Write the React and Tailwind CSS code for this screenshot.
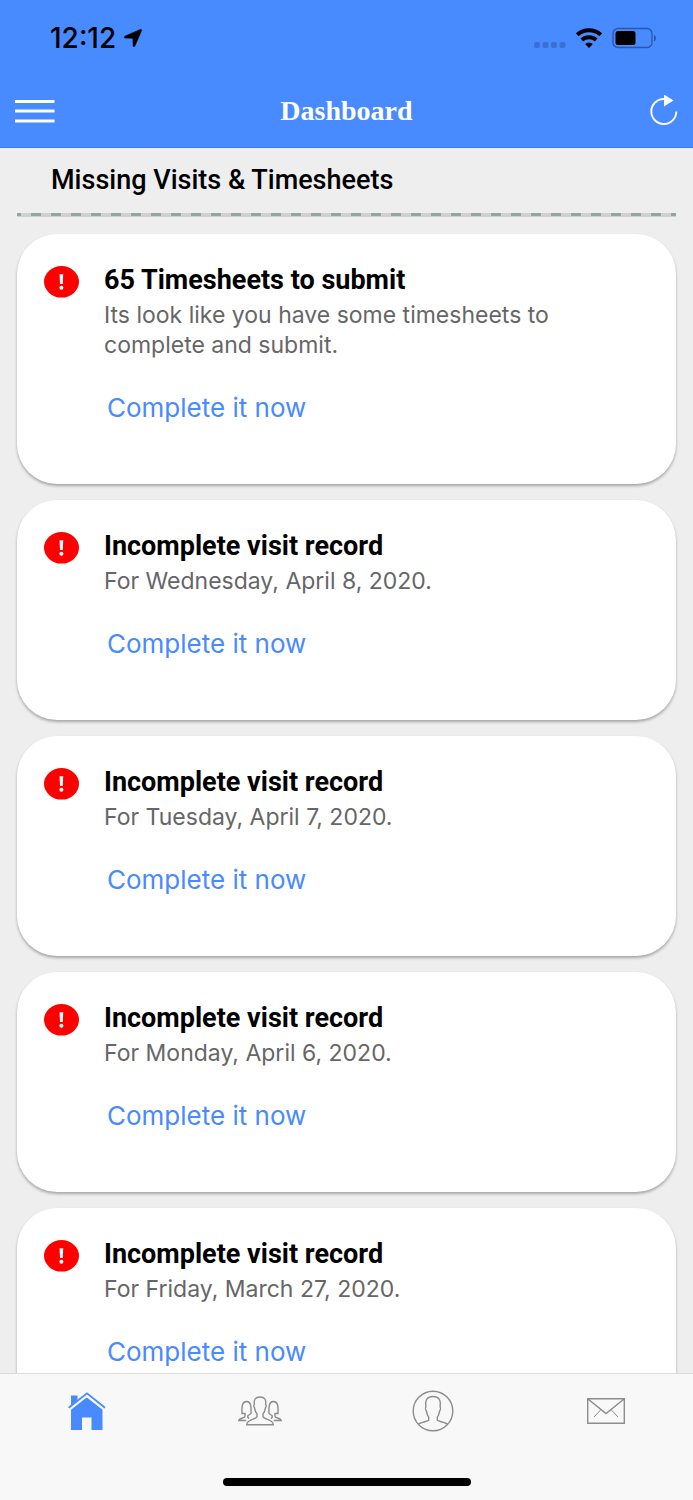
import React from 'react';

const tasks = [
    { title: '65 Timesheets to submit', text: 'Its look like you have some timesheets to complete and submit.' },
    { title: 'Incomplete visit record', text: 'For Wednesday, April 8, 2020.' },
    { title: 'Incomplete visit record', text: 'For Tuesday, April 7, 2020.' },
    { title: 'Incomplete visit record', text: 'For Monday, April 6, 2020.' },
    { title: 'Incomplete visit record', text: 'For Friday, March 27, 2020.' },
];

const StatusBar = () => (
    <div className="flex items-center justify-between h-[76px] pl-[50px] pr-9">
        <div className="flex items-center gap-2">
            <span className="text-[28px] leading-8 font-medium">12:12</span>
            <svg width="18" height="18" viewBox="0 0 18 18" stroke="#000" strokeWidth=".6" aria-hidden="true">
                <path d="M16.300.500.900 7.200C0 7.600.100 8.900 1 9l7.300.200c.4 0 .6.200.6.600l.2 7c.1 1.100 1.300 1.200 1.800.3L17.500 1.700c.4-.9-.3-1.600-1.200-1.200Z" />
            </svg>
        </div>
        <div className="flex items-center">
            <svg width="32" height="22" viewBox="0 0 32 22" fill="#3c70cf" aria-hidden="true">
                <rect x="0" y="15" width="6" height="6" rx="2" />
                <rect x="8.500" y="15" width="6" height="6" rx="2" />
                <rect x="17" y="15" width="6" height="6" rx="2" />
                <rect x="25.500" y="15" width="6" height="6" rx="2" />
            </svg>
            <svg className="ml-[10px]" width="26" height="20" viewBox="0 0 26 20" aria-hidden="true">
                <path d="M1.200 6.800a17.500 17.500 0 0 1 23.600 0" fill="none" stroke="#000" strokeWidth="4" />
                <path d="M5.800 12a10.800 10.800 0 0 1 14.400 0" fill="none" stroke="#000" strokeWidth="3.800" />
                <path d="M13 20l-3.900-4.100a5.800 5.800 0 0 1 7.800 0Z" />
            </svg>
            <svg className="ml-[10px]" width="45" height="22" viewBox="0 0 45 22" aria-hidden="true">
                <rect x="1" y="1.500" width="39" height="19" rx="5" fill="none" stroke="#2b57a3" strokeWidth="1.300" />
                <rect x="3.500" y="4" width="20" height="14" rx="2.500" />
                <path d="M42 8c2.600 1 2.600 5.500 0 6.500Z" fill="#2b57a3" />
            </svg>
        </div>
    </div>
);

const AlertIcon = () => (
    <svg className="shrink-0 mt-0.5" width="35" height="32" viewBox="0 0 35 32" aria-hidden="true">
        <ellipse cx="17.500" cy="15.800" rx="17.500" ry="15.800" fill="#f00" />
        <path d="M15.600 8.200h3.600l-.4 9.800h-2.800Z" fill="#fff" />
        <circle cx="17.400" cy="21.700" r="2" fill="#fff" />
    </svg>
);

const TaskCard = ({ title, text }) => (
    <li className="flex items-start gap-[25px] bg-white rounded-[40px] pt-[30px] pb-[60px] pl-[27px] pr-20 shadow-[0_2px_3px_rgba(0,0,0,0.3)]">
        <AlertIcon />
        <div>
            <h2 className="text-[27px] leading-8 font-bold text-black font-[Roboto,sans-serif]">{title}</h2>
            <p className="mt-1 text-[23px] leading-[30px] text-[#666]">{text}</p>
            <a href="#" className="block w-fit mt-8 ml-[3px] text-[26px] leading-8 text-[#488aff]">Complete it now</a>
        </div>
    </li>
);

const HomeIcon = () => (
    <svg width="38" height="40" viewBox="0 0 38 40" aria-hidden="true">
        <path d="M3 18.500V4.500h6.500v7L19 6.500l15.500 12V39H23.500V26.500H14V39H3Z" fill="#488aff" />
        <path d="M.7 18.500 19 4 37 18.500" fill="none" stroke="#f8f8f8" strokeWidth="3.500" />
        <path d="M.7 16.800 19 2.300 37 16.800" fill="none" stroke="#488aff" strokeWidth="1.800" />
    </svg>
);

const PeopleIcon = () => (
    <svg width="44" height="32" viewBox="0 0 44 32" fill="none" stroke="#8c8c8c" strokeWidth="1.400" aria-hidden="true">
        <path d="M19 21.500v-2.700c-2.200-2-2.200-4.300-2.400-6-1-.8-1-2.700-.2-3.500C15.600 4.500 17.500 2 22 2s6.400 2.500 5.600 7.300c.8.800.8 2.700-.2 3.500-.2 1.700-.2 4-2.400 6v2.700c1.200 3.600 10 2.500 10.300 8.300H8.700C9 24 17.800 25.100 19 21.500Z" />
        <path d="M11 23.500c-1-.5-1.400-1.200-1.200-2.700L13 18.500c.4-7.500-.2-12-4.500-12S3.600 11 4 18.500h3v2.700c0 2.300-5.500 1.200-6.300 4.300h7.500" />
        <path d="M33 23.500c1-.5 1.400-1.200 1.200-2.700L31 18.500c-.4-7.500.2-12 4.500-12s4.900 4.500 4.500 12h-3v2.700c0 2.300 5.500 1.200 6.300 4.300h-7.500" />
    </svg>
);

const ProfileIcon = () => (
    <svg width="42" height="42" viewBox="0 0 42 42" fill="none" stroke="#8c8c8c" strokeWidth="1.400" aria-hidden="true">
        <circle cx="21" cy="21" r="19.800" />
        <path d="M6.500 34c4-2 8.500-2.500 10.200-3.700v-3c-1.600-2-1.800-4-2.200-6-.9-1-1.300-3.500-.6-4.800C12.900 9.500 15.500 6.500 21 6.500s8.100 3 7.100 10c.7 1.300.3 3.800-.6 4.800-.4 2-.6 4-2.200 6v3C27 31.500 31.500 32 35.500 34" />
    </svg>
);

const MailIcon = () => (
    <svg width="38" height="26" viewBox="0 0 38 26" fill="none" stroke="#8c8c8c" strokeWidth="1.400" aria-hidden="true">
        <path d="M.7.7h36.600v24.600H.7ZM.7.7 19 15.500 37.300.7" />
        <path d="M14 11.500 7 19M24 11.500 31 19" strokeWidth="1" />
    </svg>
);

const tabs = [
    { label: 'Home', Icon: HomeIcon },
    { label: 'People', Icon: PeopleIcon },
    { label: 'Profile', Icon: ProfileIcon },
    { label: 'Messages', Icon: MailIcon },
];

const App = () => {
    return (
        <div className="flex flex-col h-screen bg-[#eee] font-[Inter,sans-serif]">
            <header className="shrink-0 bg-[#488aff] border-b border-[#3d7be8]">
                <StatusBar />
                <div className="grid grid-cols-[1fr_auto_1fr] items-center h-[71px] px-[15px] pb-0.5 text-white">
                    <button type="button" aria-label="Menu" className="w-fit">
                        <svg width="40" height="24" viewBox="0 0 40 24" fill="#fff" aria-hidden="true">
                            <rect y="1" width="39.500" height="3" />
                            <rect y="10.500" width="39.500" height="3" />
                            <rect y="20.500" width="39.500" height="3" />
                        </svg>
                    </button>
                    <h1 className="text-[28px] leading-8 font-bold font-['Liberation_Serif',serif]">Dashboard</h1>
                    <button type="button" aria-label="Refresh" className="w-fit justify-self-end">
                        <svg width="28" height="32" viewBox="0 0 28 32" aria-hidden="true">
                            <path d="M26.300 16.500A12.500 12.500 0 1 1 14 4" fill="none" stroke="#fff" strokeWidth="1.900" />
                            <path d="M14-.500v12l9.500-6Z" fill="#fff" />
                        </svg>
                    </button>
                </div>
            </header>

            <main className="flex-1 min-h-0 overflow-y-auto [scrollbar-width:none] px-[17px]">
                <h2 className="pl-[34px] pt-4 pb-[17px] text-[27px] leading-8 font-medium font-[Roboto,sans-serif]">
                    Missing Visits &amp; Timesheets
                </h2>
                <div className="h-1 mb-[17px] bg-[#d0d0d0] bg-[linear-gradient(90deg,#95a5a6_10px,transparent_10px)] bg-size-[20px_3px] bg-repeat-x bg-position-[-6px_0]" />
                <ul className="flex flex-col gap-4 pb-4">
                    {tasks.map((task, index) => (
                        <TaskCard key={index} title={task.title} text={task.text} />
                    ))}
                </ul>
            </main>

            <nav className="shrink-0 flex flex-col h-[127px] bg-[#f8f8f8] border-t border-[#dcdcdc]">
                <div className="grid grid-cols-4 h-[74px]">
                    {tabs.map(({ label, Icon }) => (
                        <button key={label} type="button" aria-label={label} className="flex items-center justify-center">
                            <Icon />
                        </button>
                    ))}
                </div>
                <div className="mt-auto mb-[14px] mx-auto w-[248px] h-2 rounded-full bg-black" />
            </nav>
        </div>
    );
};

export default App;
